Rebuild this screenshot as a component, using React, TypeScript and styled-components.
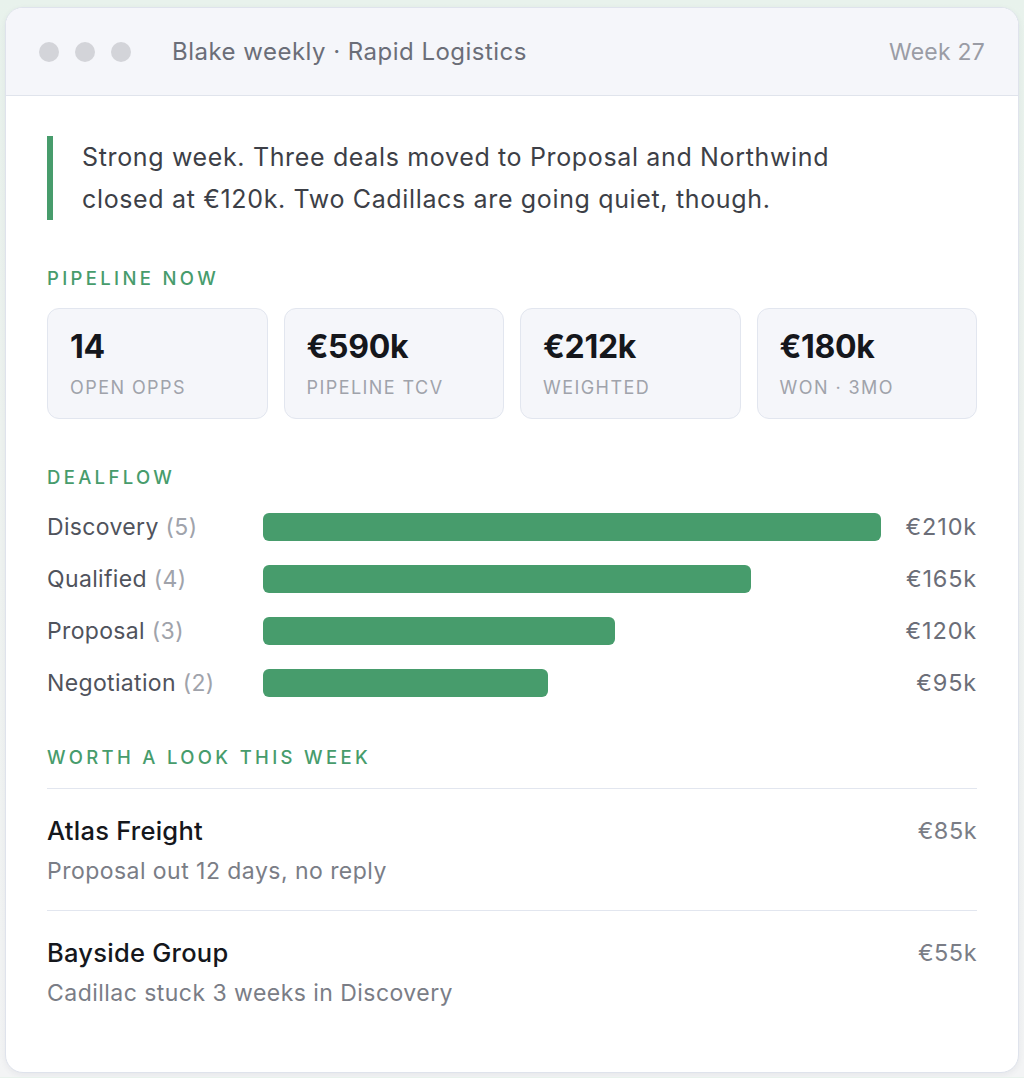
import React from "react";
import styled, { createGlobalStyle } from "styled-components";

const GlobalStyle = createGlobalStyle`
  html, body { margin: 0; padding: 0; }
  body {
    background: linear-gradient(180deg, #e8f2ec 0%, #eef3f0 40%, #f3f4f5 100%);
    font-family: Inter, "Noto Sans", sans-serif;
    -webkit-font-smoothing: antialiased;
  }
`;

const Page = styled.div`
  padding: 7px 5px 4px 5px;
`;

const Window = styled.div`
  background: #ffffff;
  border: 1.5px solid #dfe3ec;
  border-radius: 18px;
  overflow: hidden;
  box-shadow: 0 2px 6px rgba(30, 40, 60, 0.06);
`;

const TitleBar = styled.div`
  height: 88px;
  background: #f5f6fa;
  border-bottom: 1.5px solid #e0e4ec;
  display: flex;
  align-items: center;
  padding: 0 33px 0 33px;
  box-sizing: border-box;
`;

const Dots = styled.div`
  display: flex;
  gap: 16px;
  margin-right: 41px;
`;

const Dot = styled.span`
  width: 20px;
  height: 20px;
  border-radius: 50%;
  background: #d3d4d9;
`;

const Title = styled.div`
  flex: 1;
  font-size: 24px;
  letter-spacing: 0.02em;
  color: #6b6e78;
`;

const Week = styled.div`
  font-size: 23px;
  letter-spacing: 0.01em;
  color: #9a9ca5;
`;

const Body = styled.div`
  padding: 40px 41px 40px 41px;
  display: flex;
  flex-direction: column;
`;

const Quote = styled.div`
  border-left: 6px solid #479c6c;
  padding-left: 29px;
  font-size: 25px;
  letter-spacing: 0.026em;
  line-height: 42px;
  color: #3d3f47;
  margin-bottom: 47px;
`;

const SectionLabel = styled.div`
  font-size: 18.5px;
  letter-spacing: 0.18em;
  color: #479c6c;
  font-weight: 500;
  line-height: 22px;
  margin-bottom: 19px;
`;

const Stats = styled.div`
  display: grid;
  grid-template-columns: repeat(4, 1fr);
  gap: 16px;
  margin-bottom: 47px;
`;

const StatCard = styled.div`
  background: #f5f6fa;
  border: 1.5px solid #e2e6ef;
  border-radius: 12px;
  height: 111px;
  box-sizing: border-box;
  padding: 19px 22px 0 22px;
`;

const StatValue = styled.div`
  font-size: 32px;
  font-weight: 700;
  color: #15171c;
  line-height: 38px;
  letter-spacing: -0.01em;
`;

const StatLabel = styled.div`
  font-size: 18px;
  letter-spacing: 0.08em;
  color: #a0a3ab;
  margin-top: 9px;
  line-height: 26px;
`;

const Flow = styled.div`
  display: grid;
  grid-template-columns: 200px 1fr 80px;
  column-gap: 16px;
  row-gap: 24px;
  align-items: center;
  margin-bottom: 49px;
  margin-top: 6px;
`;

const StageName = styled.div`
  font-size: 23px;
  letter-spacing: 0.015em;
  color: #50535c;
  line-height: 28px;
  white-space: nowrap;
`;

const Count = styled.span`
  color: #a0a3ab;
`;

const Track = styled.div`
  height: 28px;
`;

const Bar = styled.div`
  height: 28px;
  border-radius: 6px;
  background: #479c6c;
`;

const Amount = styled.div`
  font-size: 23.5px;
  letter-spacing: 0.035em;
  color: #6b6e78;
  text-align: right;
  line-height: 28px;
`;

const List = styled.div`
  display: flex;
  flex-direction: column;
  margin-top: 1px;
`;

const Item = styled.div`
  border-top: 1.5px solid #e2e6ef;
  padding: 26px 0 23px 0;
  display: flex;
  justify-content: space-between;
  align-items: flex-start;
`;

const ItemText = styled.div`
  display: flex;
  flex-direction: column;
  gap: 8px;
`;

const ItemTitle = styled.div`
  font-size: 25.5px;
  letter-spacing: 0.01em;
  font-weight: 500;
  color: #15171c;
  line-height: 32px;
`;

const ItemSub = styled.div`
  font-size: 23px;
  letter-spacing: 0.02em;
  color: #7a7d86;
  line-height: 32px;
`;

const ItemValue = styled.div`
  font-size: 23.5px;
  letter-spacing: 0.02em;
  color: #7a7d86;
  line-height: 32px;
`;

const stats = [
  { value: "14", label: "OPEN OPPS" },
  { value: "€590k", label: "PIPELINE TCV" },
  { value: "€212k", label: "WEIGHTED" },
  { value: "€180k", label: "WON · 3MO" },
];

const stages = [
  { name: "Discovery", count: 5, amount: "€210k", pct: 100 },
  { name: "Qualified", count: 4, amount: "€165k", pct: 79 },
  { name: "Proposal", count: 3, amount: "€120k", pct: 57 },
  { name: "Negotiation", count: 2, amount: "€95k", pct: 46.1 },
];

const items = [
  { title: "Atlas Freight", sub: "Proposal out 12 days, no reply", value: "€85k" },
  { title: "Bayside Group", sub: "Cadillac stuck 3 weeks in Discovery", value: "€55k" },
];

export default function App() {
  return (
    <>
      <GlobalStyle />
      <Page>
        <Window>
          <TitleBar>
            <Dots>
              <Dot />
              <Dot />
              <Dot />
            </Dots>
            <Title>Blake weekly · Rapid Logistics</Title>
            <Week>Week 27</Week>
          </TitleBar>
          <Body>
            <Quote>
              Strong week. Three deals moved to Proposal and Northwind
              <br />
              closed at €120k. Two Cadillacs are going quiet, though.
            </Quote>

            <SectionLabel>PIPELINE NOW</SectionLabel>
            <Stats>
              {stats.map((s) => (
                <StatCard key={s.label}>
                  <StatValue>{s.value}</StatValue>
                  <StatLabel>{s.label}</StatLabel>
                </StatCard>
              ))}
            </Stats>

            <SectionLabel>DEALFLOW</SectionLabel>
            <Flow>
              {stages.map((s) => (
                <React.Fragment key={s.name}>
                  <StageName>
                    {s.name} <Count>({s.count})</Count>
                  </StageName>
                  <Track>
                    <Bar style={{ width: `${s.pct}%` }} />
                  </Track>
                  <Amount>{s.amount}</Amount>
                </React.Fragment>
              ))}
            </Flow>

            <SectionLabel>WORTH A LOOK THIS WEEK</SectionLabel>
            <List>
              {items.map((it) => (
                <Item key={it.title}>
                  <ItemText>
                    <ItemTitle>{it.title}</ItemTitle>
                    <ItemSub>{it.sub}</ItemSub>
                  </ItemText>
                  <ItemValue>{it.value}</ItemValue>
                </Item>
              ))}
            </List>
          </Body>
        </Window>
      </Page>
    </>
  );
}
